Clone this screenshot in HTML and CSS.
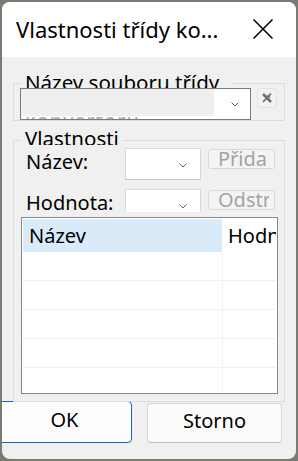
FILE: index.html
```html
<!doctype html>
<html>
<head>
    <meta charset="utf-8">
    <title>Vlastnosti třídy konvertoru</title>
    <link rel="stylesheet" href="styles.css">
</head>
<body>

<div class="dialog">

    <div class="titlebar">
        <span class="title">Vlastnosti třídy ko...</span>
        <svg class="close" width="20" height="20" viewBox="0 0 20 20">
            <path d="M0.5 0.5 L19.5 19.5 M19.5 0.5 L0.5 19.5" stroke="#000000" stroke-width="1.5" fill="none"/>
        </svg>
    </div>

    <div class="content">

        <!-- soubor tridy -->
        <div class="group group_file">
            <div class="group_label label_file">Název souboru třídy</div>
            <div class="combo combo_wide">
                <div class="cover">
                    <div class="cover_fill"></div>
                    <div class="cover_strip"><span>konvertoru</span></div>
                </div>
                <svg class="chevron" width="8" height="5" viewBox="0 0 8 5">
                    <path d="M0.5 0.5 L4 4 L7.5 0.5" stroke="#606060" stroke-width="1" fill="none"/>
                </svg>
            </div>
            <div class="clear_btn">
                <svg width="12" height="12" viewBox="0 0 12 12">
                    <path d="M2 2 L10 10" stroke="#707070" stroke-width="2.6" fill="none"/>
                    <path d="M10 1.5 L2 10" stroke="#707070" stroke-width="1.8" fill="none"/>
                    <path d="M6.5 3 L9 5.5" stroke="#707070" stroke-width="1.6" fill="none"/>
                </svg>
            </div>
        </div>

        <!-- vlastnosti -->
        <div class="group group_props">
            <div class="group_label label_props">Vlastnosti</div>

            <div class="prop_row">
                <span class="prop_label">Název:</span>
                <div class="combo combo_small">
                    <svg class="chevron" width="8" height="5" viewBox="0 0 8 5">
                        <path d="M0.5 0.5 L4 4 L7.5 0.5" stroke="#606060" stroke-width="1" fill="none"/>
                    </svg>
                </div>
                <div class="small_btn"><span>Přidat</span></div>
            </div>

            <div class="prop_row prop_row_cut">
                <span class="prop_label">Hodnota:</span>
                <div class="combo combo_small">
                    <svg class="chevron" width="8" height="5" viewBox="0 0 8 5">
                        <path d="M0.5 0.5 L4 4 L7.5 0.5" stroke="#606060" stroke-width="1" fill="none"/>
                    </svg>
                </div>
                <div class="small_btn small_btn_wide"><span>Odstranit</span></div>
            </div>

            <div class="list">
                <div class="list_inner">
                    <div class="list_head">
                        <div class="head_cell head_name">Název</div>
                        <div class="head_cell head_value">Hodnota</div>
                    </div>
                    <div class="list_row"><div class="cell_name"></div><div class="cell_value"></div></div>
                    <div class="list_row"><div class="cell_name"></div><div class="cell_value"></div></div>
                    <div class="list_row"><div class="cell_name"></div><div class="cell_value"></div></div>
                    <div class="list_row"><div class="cell_name"></div><div class="cell_value"></div></div>
                    <div class="list_row"><div class="cell_name"></div><div class="cell_value"></div></div>
                </div>
            </div>
        </div>

        <div class="buttons">
            <div class="btn btn_ok">OK</div>
            <div class="btn btn_cancel">Storno</div>
        </div>

    </div>
</div>

</body>
</html>
```

FILE: styles.css
```css
body {
    margin: 0;
    background: #7a7a72;
    font-family: "Noto Sans", "Open Sans", sans-serif;
    font-size: 20px;
    color: #000000;
}
.dialog {
    margin: 2px 0 0 2px;
    width: 294px;
    height: 457px;
    border-radius: 8px;
    overflow: hidden;
    background: #f0f0f0;
}

/* title bar */
.titlebar {
    display: flex;
    align-items: flex-start;
    height: 55px;
    box-sizing: border-box;
    padding: 12px 23px 0 14px;
    background: #ffffff;
}
.title {
    font-size: 22px;
    line-height: 30px;
    white-space: nowrap;
}
.close {
    margin-left: auto;
    margin-top: 5px;
}

.content {
    height: 402px;
    box-sizing: border-box;
    padding: 26px 0 0 11px;
}

/* group boxes */
.group {
    position: relative;
    z-index: 1;
    width: 272px;
    box-sizing: border-box;
    border: 1px solid #dcdcdc;
}
.group_label {
    position: absolute;
    left: 6px;
    padding-left: 5px;
    background: #f0f0f0;
    font-size: 20.5px;
    line-height: 28px;
    white-space: nowrap;
    overflow: hidden;
}
.group_file {
    display: flex;
    align-items: flex-start;
    gap: 6px;
    height: 38px;
    padding: 4px 0 0 6px;
}
.label_file {
    top: -16px;
    width: 206px;
    height: 22px;
}
.group_props {
    height: 262px;
    margin-top: 19px;
    padding: 7px 0 0 7px;
}
.label_props {
    top: -17px;
    width: 97px;
    height: 21px;
}

/* combos */
.combo {
    position: relative;
    z-index: 1;
    display: flex;
    align-items: flex-start;
    box-sizing: border-box;
    height: 32px;
    background: #ffffff;
}
.combo_wide {
    width: 231px;
    border: 1px solid #7a7a7a;
}
.combo_small {
    width: 76px;
    border: 1px solid #d9d9d9;
    border-bottom-color: #c4c4c4;
}
.chevron {
    margin-left: auto;
    margin-top: 14px;
}
.combo_wide .chevron {
    margin-right: 11px;
    margin-top: 13px;
}
.combo_small .chevron {
    margin-right: 13px;
    margin-top: 14px;
}
.cover {
    width: 193px;
}
.cover_fill {
    height: 27px;
    background: #efefef;
}
.cover_strip {
    height: 2px;
    margin-top: 1px;
    overflow: hidden;
    padding-left: 4px;
    color: #a8a8a8;
    line-height: 27px;
    letter-spacing: 1px;
}
.cover_strip span {
    display: block;
    margin-top: -10px;
}
.clear_btn {
    display: flex;
    align-items: center;
    justify-content: center;
    width: 20px;
    height: 20px;
    box-sizing: border-box;
    border: 1px solid #e3e3e3;
    border-radius: 3px;
    background: #f2f2f2;
}

/* property rows */
.prop_row {
    display: flex;
    align-items: flex-start;
    height: 32px;
    padding-left: 5px;
}
.prop_row_cut {
    height: 23px;
    margin-top: 9px;
    overflow: hidden;
}
.prop_label {
    width: 99px;
    line-height: 27px;
}
.small_btn {
    width: 67px;
    height: 20px;
    box-sizing: border-box;
    margin: 1px 0 0 7px;
    padding-left: 9px;
    border: 1px solid #d8d8d8;
    border-radius: 3px;
    background: #f4f4f4;
    color: #a3a3a3;
    line-height: 17px;
    white-space: nowrap;
    overflow: hidden;
}
.small_btn span {
    display: block;
    width: 49px;
    overflow: hidden;
}
.small_btn_wide span {
    width: 51px;
}

/* list view */
.list {
    width: 257px;
    height: 177px;
    box-sizing: border-box;
    margin-top: 5px;
    border: 1px solid #828790;
    padding: 1px;
    background: #ffffff;
}
.list_inner {
    height: 100%;
    overflow: hidden;
}
.list_head {
    display: flex;
    height: 33px;
    line-height: 33px;
    white-space: nowrap;
}
.head_name {
    width: 199px;
    margin-right: 1px;
    padding-left: 6px;
    box-sizing: border-box;
    background: #d9ebf9;
}
.head_value {
    flex: 1;
    padding-left: 5px;
    overflow: hidden;
}
.list_row {
    display: flex;
    height: 29px;
    box-sizing: border-box;
    border-bottom: 1px solid #f0f0f0;
}
.cell_name {
    width: 200px;
    box-sizing: border-box;
    border-right: 1px solid #f0f0f0;
}

/* dialog buttons */
.buttons {
    display: flex;
    align-items: flex-start;
    gap: 15px;
    margin: -1px 0 0 -16px;
}
.btn {
    width: 135px;
    box-sizing: border-box;
    border-radius: 4px;
    text-align: center;
}
.btn_ok {
    height: 42px;
    line-height: 36px;
    border: 1px solid #1066c4;
    background: #fdfdfd;
}
.btn_cancel {
    height: 40px;
    margin-top: 2px;
    line-height: 33px;
    border: 1px solid #d6d6d6;
    border-bottom-color: #bdbdbd;
    background: #fbfbfb;
}
```
